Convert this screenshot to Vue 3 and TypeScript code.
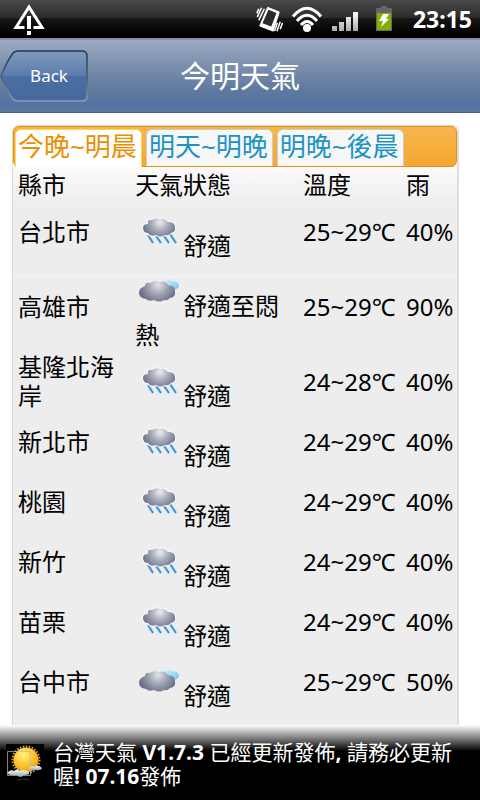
<script setup lang="ts">
import { ref } from 'vue'

type Sky = 'rain' | 'cloud'

interface Forecast {
  city: string
  sky: Sky
  state: string
  temp: string
  rain: string
}

const tabs: string[] = ['今晚~明晨', '明天~明晚', '明晚~後晨']
const active = ref(0)

const forecasts: Forecast[] = [
  { city: '台北市', sky: 'rain', state: '舒適', temp: '25~29℃', rain: '40%' },
  { city: '高雄市', sky: 'cloud', state: '舒適至悶熱', temp: '25~29℃', rain: '90%' },
  { city: '基隆北海岸', sky: 'rain', state: '舒適', temp: '24~28℃', rain: '40%' },
  { city: '新北市', sky: 'rain', state: '舒適', temp: '24~29℃', rain: '40%' },
  { city: '桃園', sky: 'rain', state: '舒適', temp: '24~29℃', rain: '40%' },
  { city: '新竹', sky: 'rain', state: '舒適', temp: '24~29℃', rain: '40%' },
  { city: '苗栗', sky: 'rain', state: '舒適', temp: '24~29℃', rain: '40%' },
  { city: '台中市', sky: 'cloud', state: '舒適', temp: '25~29℃', rain: '50%' }
]
</script>

<template>
  <div class="screen">
    <div class="status">
      <svg class="warn" width="32" height="32" viewBox="0 0 32 32" aria-hidden="true">
        <path d="M11.500 24.500H3L16 4l13 20.500h-8.500" fill="none" stroke="#fff" stroke-width="3" />
        <path d="M14 13h4v13h-4zM14 28h4v4h-4z" fill="#fff" />
      </svg>
      <div class="indicators">
        <svg width="28" height="28" viewBox="0 0 30 28" aria-hidden="true">
          <path d="M13.500 1.500L26 6.500L19.500 27L5 21.500Z" fill="#fff" stroke="#fff" stroke-linejoin="round" />
          <path d="M14.500 4L23 7.500L17.500 22L8 18.500Z" fill="#2a2a2a" />
          <path d="M4 3L2 8M7 2L2.500 12M10 3L4 15.500M24 18l-3 9M27 17l-3.500 10M29.500 18l-2.500 7" stroke="#fff" stroke-width="1.600" fill="none" />
        </svg>
        <svg width="32" height="28" viewBox="0 0 32 28" aria-hidden="true">
          <g fill="none" stroke="#fff" stroke-width="3">
            <path d="M2 11.500Q16-5 30 11.500" />
            <path d="M6 16Q16 4.500 26 16" />
            <path d="M10 20Q16 13 22 20" />
          </g>
          <circle cx="16" cy="23" r="4" fill="#fff" />
        </svg>
        <svg width="28" height="28" viewBox="0 0 28 28" aria-hidden="true">
          <defs>
            <linearGradient id="bars" x1="0" y1="0" x2="0" y2="1">
              <stop offset="0" stop-color="#fff" />
              <stop offset="1" stop-color="#aaa" />
            </linearGradient>
          </defs>
          <path d="M1 21h5v5H1zM8 17h5v9H8zM15 12h5v14h-5zM22 7h5v19h-5z" fill="url(#bars)" />
        </svg>
        <svg class="battery" width="18" height="28" viewBox="0 0 18 28" aria-hidden="true">
          <path d="M6 1h6v2h4q1 0 1 1v22H1V4q0-1 1-1h4z" fill="#666" />
          <path d="M2 8h14v17H2z" fill="#80b000" />
          <path d="M8 9h6l-3 5h3l-8 8 2-6H4z" fill="#fff" />
        </svg>
        <time class="clock">23:15</time>
      </div>
    </div>

    <header class="nav">
      <button class="back" type="button">
        <svg class="back-shape" viewBox="0 0 90 54" preserveAspectRatio="none" aria-hidden="true">
          <defs>
            <linearGradient id="back-fill" x1="0" y1="0" x2="0" y2="1">
              <stop offset="0" stop-color="#8199bf" />
              <stop offset=".5" stop-color="#5c7cab" />
              <stop offset=".5" stop-color="#496fa3" />
              <stop offset="1" stop-color="#46689a" />
            </linearGradient>
            <linearGradient id="back-edge" x1="0" y1="0" x2="0" y2="1">
              <stop offset="0" stop-color="#24364f" />
              <stop offset=".6" stop-color="#50647f" />
              <stop offset="1" stop-color="#8b9bb6" />
            </linearGradient>
          </defs>
          <path d="M1 27Q6 14 13 4Q15 2 18 2H82Q87 2 87 7V47Q87 52 82 52H18Q15 52 13 50Q6 40 1 27Z" fill="url(#back-fill)" stroke="url(#back-edge)" stroke-width="1.500" />
        </svg>
        <span class="back-label">Back</span>
      </button>
      <h1>今明天氣</h1>
    </header>

    <main>
      <section class="card">
        <div class="tabs" role="tablist">
          <button
            v-for="(tab, i) in tabs"
            :key="tab"
            type="button"
            role="tab"
            class="tab"
            :class="{ active: active === i }"
            :aria-selected="active === i"
            @click="active = i"
          >{{ tab }}</button>
        </div>
        <table>
          <colgroup>
            <col class="c-city" />
            <col class="c-state" />
            <col class="c-temp" />
            <col />
          </colgroup>
          <thead>
            <tr>
              <th scope="col">縣市</th>
              <th scope="col">天氣狀態</th>
              <th scope="col">溫度</th>
              <th scope="col">雨</th>
            </tr>
          </thead>
          <tbody>
            <tr v-for="row in forecasts" :key="row.city">
              <td>{{ row.city }}</td>
              <td class="state">
                <svg v-if="row.sky === 'rain'" class="sky" viewBox="0 -3 48 48" aria-hidden="true">
                  <defs>
                    <radialGradient id="rain-cloud" gradientUnits="userSpaceOnUse" cx="25" cy="12" r="17">
                      <stop offset="0" stop-color="#eceef2" />
                      <stop offset=".5" stop-color="#a7acba" />
                      <stop offset="1" stop-color="#737a90" />
                    </radialGradient>
                  </defs>
                  <path d="M13 25l5 8M21 26l5 7M29 26l5 7M35 24l6 9" stroke="#a9d3f3" stroke-width="3" />
                  <path d="M13 25l5 8M21 26l5 7M29 26l5 7M35 24l6 9" stroke="#3e8bd0" stroke-width="1.500" />
                  <path d="M13 14Q12 9 17 10Q21 7 25 9Q29 7 33 12Q40 12 40 17Q41 22 36 23Q34 26 30 25Q25 28 21 25Q15 27 13 23Q8 23 8 18Q8 14 13 14Z" fill="url(#rain-cloud)" stroke="#fafafa" stroke-width="2" paint-order="stroke" />
                </svg>
                <svg v-else class="sky" viewBox="0 -5 48 48" aria-hidden="true">
                  <defs>
                    <radialGradient id="dark-cloud" gradientUnits="userSpaceOnUse" cx="23" cy="13" r="19">
                      <stop offset="0" stop-color="#e2e4ea" />
                      <stop offset=".5" stop-color="#9fa4b3" />
                      <stop offset="1" stop-color="#687087" />
                    </radialGradient>
                    <linearGradient id="far-cloud" x1="0" y1="0" x2="1" y2="1">
                      <stop offset="0" stop-color="#e6f6fd" />
                      <stop offset="1" stop-color="#6ec2ef" />
                    </linearGradient>
                  </defs>
                  <path d="M25 12Q26 8 30 9Q33 6 37 9Q44 9 44 14Q43 18 37 18H30Z" fill="url(#far-cloud)" />
                  <path d="M10 14Q10 10 15 11Q19 8 24 10Q30 8 33 13Q41 14 40 20Q41 25 35 26Q32 29 29 28Q24 31 19 28Q14 30 11 27Q4 26 4 21Q4 16 10 14Z" fill="url(#dark-cloud)" />
                </svg>{{ row.state }}</td>
              <td>{{ row.temp }}</td>
              <td>{{ row.rain }}</td>
            </tr>
          </tbody>
        </table>
      </section>
    </main>

    <footer class="notice">
      <svg class="sun" viewBox="0 0 38 40" aria-hidden="true">
        <defs>
          <radialGradient id="sun-fill" cx=".4" cy=".3" r=".75">
            <stop offset="0" stop-color="#fff08a" />
            <stop offset=".5" stop-color="#fdc930" />
            <stop offset="1" stop-color="#f39a13" />
          </radialGradient>
          <linearGradient id="small-cloud" x1="0" y1="0" x2="0" y2="1">
            <stop offset="0" stop-color="#fff" />
            <stop offset="1" stop-color="#7fa4b4" />
          </linearGradient>
        </defs>
        <path d="M0 0h38v40H0z" fill="#000" />
        <circle cx="20" cy="16" r="13.500" fill="none" stroke="#d9a52c" stroke-width="2" stroke-dasharray="1.500 1.500" />
        <circle cx="20" cy="16" r="12.500" fill="url(#sun-fill)" />
        <path d="M1 29Q4 25 8 27Q11 24 14 27Q18 25 23 28Q24 31 18 31Q14 35 11 31Q3 32 1 29Z" fill="url(#small-cloud)" />
        <path d="M22 25Q25 21 28 23Q32 20 36 24Q35 27 29 26Z" fill="url(#small-cloud)" />
        <path d="M11 36q6-2 12 0" stroke="#333" fill="none" />
        <path d="M1.500 7.500h23v24h-23z" fill="none" stroke="#bbb" stroke-opacity=".7" />
      </svg>
      <p>台灣天氣 <b>V1.7.3</b> 已經更新發佈<b>,</b> 請務必更新喔<b>! 07.16</b>發佈</p>
    </footer>
  </div>
</template>

<style>
body {
  margin: 0;
  background: #fff;
}
</style>

<style scoped>
.screen {
  display: flex;
  flex-direction: column;
  height: 100vh;
  overflow: hidden;
  font-family: "Noto Sans", "Noto Sans CJK TC", sans-serif;
  font-size: 24px;
  line-height: 29px;
  color: #000;
}
.status {
  flex: none;
  display: flex;
  justify-content: space-between;
  align-items: flex-start;
  box-sizing: border-box;
  height: 38px;
  padding: 3px 8px 0 13px;
  background: linear-gradient(#4a4a4a, #2c2c2c 46%, #171717 48%, #000 90%);
  color: #fff;
}
.indicators {
  display: flex;
  align-items: center;
  gap: 8px;
  height: 32px;
}
.indicators svg {
  display: block;
}
.battery {
  margin: 0 12px 0 8px;
}
.clock {
  font-size: 23px;
  font-weight: 700;
}
.nav {
  flex: none;
  display: grid;
  grid-template-columns: 1fr auto 1fr;
  align-items: center;
  box-sizing: border-box;
  height: 75px;
  border-top: 2px solid #858fa3;
  border-bottom: 1px solid #4b6085;
  background: linear-gradient(#9dabc2, #7c90ae 35%, #5f799e 70%, #5273a3 90%, #5e7699);
}
.back {
  display: grid;
  justify-self: start;
  width: 90px;
  height: 54px;
  padding: 0;
  border: 0;
  background: none;
  color: #fff;
  font: 17px/24px "Noto Sans", sans-serif;
  cursor: pointer;
}
.back-shape,
.back-label {
  grid-area: 1 / 1;
}
.back-shape {
  width: 100%;
  height: 100%;
}
.back-label {
  place-self: center;
  padding-left: 8px;
}
h1 {
  margin: 0;
  font-size: 30px;
  font-weight: 400;
  line-height: 40px;
  color: #fff;
}
main {
  flex: 1;
  display: flex;
  flex-direction: column;
  min-height: 0;
  padding: 12px 21px 0 12px;
}
.card {
  flex: 1 0 auto;
  box-sizing: border-box;
  border: 1px solid #d8d8d8;
  border-width: 1px 2px 0 1px;
  border-right-color: #dedede;
  border-radius: 7px 7px 0 0;
  background:
    linear-gradient(#f6f6f6, #f6f6f6) 0 150px / 100% 1px no-repeat,
    linear-gradient(#fbfbfb 40px, #ededed 80px);
}
.tabs {
  display: flex;
  gap: 4px;
  box-sizing: border-box;
  height: 41px;
  padding: 2px 1px 0;
  border: 1px solid #e78f08;
  border-radius: 6px;
  background: linear-gradient(#f8b54e, #f5a72f);
}
.tab {
  padding: 0 4px 4px 2px;
  border: 1px solid #ccc;
  border-bottom: 0;
  border-radius: 6px 6px 0 0;
  background: #f7f7f7;
  color: #1c94c4;
  font: 26px/32px "Noto Sans", "Noto Sans CJK TC", sans-serif;
  cursor: pointer;
}
.tab.active {
  margin-bottom: -1px;
  padding-bottom: 5px;
  border-color: #fbd850;
  background: #fff;
  color: #eb8f00;
}
table {
  width: 100%;
  padding: 0 0 0 2px;
  border-spacing: 0;
  table-layout: fixed;
}
.c-city {
  width: 26.500%;
}
.c-state {
  width: 38%;
}
.c-temp {
  width: 23.300%;
}
th,
td {
  padding: 1px 3px 2px;
  font-weight: 400;
  text-align: left;
  vertical-align: middle;
}
th {
  padding: 3px;
}
.state {
  padding: 5px 3px 2px;
}
.sky {
  width: 48px;
  height: 48px;
}
.notice {
  flex: none;
  display: flex;
  align-items: flex-start;
  gap: 9px;
  box-sizing: border-box;
  min-height: 75px;
  padding: 15px 6px 10px;
  background: linear-gradient(#fff, #000 26px);
  color: #fff;
}
.sun {
  flex: none;
  width: 38px;
  height: 40px;
  margin-top: 4px;
}
.notice p {
  margin: 0;
  font-size: 21px;
  line-height: 24px;
}
</style>
